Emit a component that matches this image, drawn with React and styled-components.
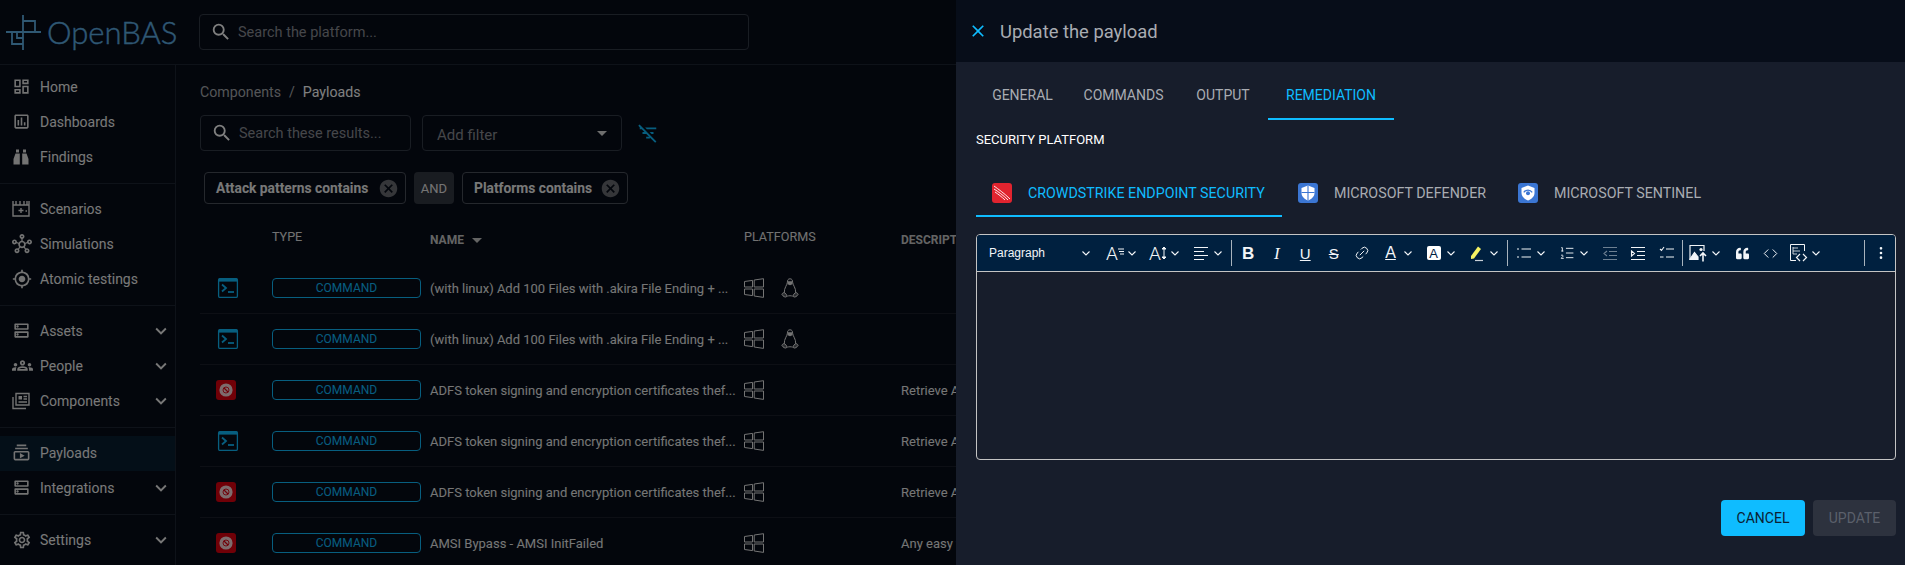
import React from "react";
import styled, { createGlobalStyle } from "styled-components";
import {
  MdOutlineDashboard, MdOutlineInsertChart, MdOutlineHub, MdOutlineGpsFixed, MdOutlineDns, MdOutlineGroups,
  MdOutlineSubscriptions, MdOutlineSettings, MdExpandMore, MdSearch, MdCancel, MdArrowDropDown, MdClose, MdFilterListOff,
} from "react-icons/md";
import { FaQuoteLeft } from "react-icons/fa";
import { Code, EllipsisVertical, Link2, ListOrdered } from "lucide-react";

const GlobalStyle = createGlobalStyle`
  html, body { margin: 0; padding: 0; background: #070d19; }
  body { font-family: Roboto, "Noto Sans", sans-serif; color: #fff; overflow: hidden; }
  * { box-sizing: border-box; }
`;

const Page = styled.div`
  width: 1905px;
  height: 565px;
  overflow: hidden;
  display: flex;
  flex-direction: column;
`;

const TopBar = styled.header`
  height: 65px;
  flex: none;
  display: flex;
  align-items: center;
  border-bottom: 1px solid #1c2433;
  padding-left: 6px;
`;

const Logo = styled.div`
  width: 193px;
  display: flex;
  align-items: center;
  gap: 6px;
  font-family: Lato, sans-serif;
  font-weight: 300;
  font-size: 31px;
  -webkit-text-stroke: 0.4px #5fb0e6;
  color: #5fb0e6;
  svg { flex: none; }
`;

const SearchBox = styled.div`
  width: ${(p) => p.$w}px;
  height: 36px;
  display: flex;
  align-items: center;
  gap: 6px;
  padding-left: 10px;
  border: 1px solid #333a47;
  border-radius: 4px;
  color: #fff;
  font-size: 14.5px;
  span { color: #8b8e95; }
`;

const Body = styled.div`
  flex: 1;
  display: flex;
  min-height: 0;
`;

const Sidebar = styled.nav`
  width: 176px;
  flex: none;
  border-right: 1px solid #1c2433;
`;

const MenuGroup = styled.div`
  padding: ${(p) => (p.$first ? "5px" : "8px")} 0 8px;
  border-bottom: ${(p) => (p.$last ? "none" : "1px solid #1c2433")};
`;

const MenuItem = styled.div`
  height: 35px;
  display: flex;
  align-items: center;
  padding: 0 0 2px 12px;
  font-size: 14px;
  background: ${(p) => (p.$active ? "rgba(15,188,255,.1)" : "transparent")};
`;

const MenuIcon = styled.span`
  width: 28px;
  flex: none;
  display: flex;
  color: #e6e6e6;
`;

const MenuLabel = styled.span`
  flex: 1;
  color: #f2f2f2;
`;

const MenuChevron = styled(MdExpandMore)`
  font-size: 22px;
  margin-right: 3px;
  color: #eee;
`;

const Main = styled.main`
  flex: 1;
  min-width: 0;
  padding: 17px 0 0 24px;
`;

const Crumbs = styled.div`
  height: 20px;
  display: flex;
  align-items: center;
  gap: 8px;
  font-size: 14.2px;
  color: #a8abb0;
  b { font-weight: 400; color: #fff; }
`;

const FilterRow = styled.div`
  margin-top: 13px;
  display: flex;
  align-items: center;
  gap: 11px;
`;

const AddFilter = styled.div`
  width: 200px;
  height: 36px;
  display: flex;
  align-items: center;
  justify-content: space-between;
  padding: 3px 7px 0 14px;
  border: 1px solid #333a47;
  border-radius: 4px;
  font-size: 15px;
  color: #8b8e95;
  svg { color: #ddd; font-size: 24px; margin-top: -3px; }
`;

const FilterOff = styled(MdFilterListOff)`
  margin-left: 4px;
  font-size: 22px;
  color: #0fbcff;
`;

const ChipRow = styled.div`
  margin: 21px 0 0 4px;
  display: flex;
  gap: 8px;
`;

const FilterChip = styled.div`
  width: ${(p) => p.$w}px;
  height: 32px;
  display: flex;
  align-items: center;
  justify-content: space-between;
  padding: 0 6px 0 11px;
  border: 1px solid #4b505b;
  border-radius: 4px;
  font-size: 13.8px;
  font-weight: 700;
  color: #f0f0f0;
  svg { font-size: 21px; color: #6a6d73; }
`;

const AndChip = styled.div`
  width: 40px;
  height: 32px;
  display: flex;
  align-items: center;
  justify-content: center;
  border-radius: 4px;
  background: #333842;
  font-size: 13px;
  color: #e8e8e8;
`;

const HeaderRow = styled.div`
  height: 59px;
  display: grid;
  grid-template-columns: 72px 158px 314px 157px 400px;
`;

const HeadCell = styled.div`
  padding-top: ${(p) => (p.$bold ? "28px" : "25px")};
  display: flex;
  align-items: flex-start;
  font-size: ${(p) => (p.$bold ? "12px" : "12.6px")};
  font-weight: ${(p) => (p.$bold ? 700 : 400)};
  line-height: 16px;
  color: ${(p) => (p.$bold ? "#c8c8c8" : "#e4e4e4")};
  svg { font-size: 24px; margin: -4px 0 0 1px; }
`;

const Row = styled.div`
  height: 51px;
  display: grid;
  grid-template-columns: 72px 158px 314px 157px 400px;
  align-items: center;
  border-bottom: 1px solid #1a1f2a;
  font-size: 13px;
  color: #eceded;
`;

const RowIcon = styled.span`
  display: flex;
  padding-left: 16px;
`;

const TypeChip = styled.div`
  width: 149px;
  height: 20px;
  display: flex;
  align-items: center;
  justify-content: center;
  border: 1px solid #0fbcff;
  border-radius: 4px;
  font-size: 12px;
  color: #0fbcff;
`;

const RowName = styled.div`
  white-space: nowrap;
  width: 306px;
`;

const Platforms = styled.div`
  display: flex;
  gap: 17px;
  color: #e8e8e8;
`;

const RowDescription = styled.div`
  white-space: nowrap;
`;

const Overlay = styled.div`
  position: fixed;
  inset: 0;
  background: rgba(0, 0, 0, 0.5);
`;

const Drawer = styled.aside`
  position: fixed;
  top: 0;
  right: 0;
  bottom: 0;
  width: 949px;
  background: #171d2b;
  display: flex;
  flex-direction: column;
`;

const DrawerHeader = styled.div`
  height: 62px;
  flex: none;
  display: flex;
  align-items: center;
  gap: 12px;
  padding-left: 12px;
  background: #070d19;
  font-size: 18.4px;
  color: #a9acb2;
  svg { font-size: 20px; color: #0fbcff; flex: none; }
`;

const DrawerBody = styled.div`
  flex: 1;
  padding: 10px 9px 0 20px;
`;

const Tabs = styled.div`
  display: flex;
  align-items: stretch;
`;

const Tab = styled.div`
  width: ${(p) => p.$w}px;
  height: 48px;
  display: flex;
  align-items: center;
  justify-content: ${(p) => (p.$icon ? "flex-start" : "center")};
  gap: 16px;
  padding: ${(p) => (p.$icon ? "2px 0 0 16px" : "0")};
  font-size: ${(p) => (p.$icon ? "14.25px" : "14px")};
  color: ${(p) => (p.$active ? "#0fbcff" : "#a9acb2")};
  border-bottom: 2px solid ${(p) => (p.$active ? "#0fbcff" : "transparent")};
  svg { flex: none; }
`;

const SectionLabel = styled.div`
  margin-top: 12px;
  height: 16px;
  line-height: 16px;
  font-size: 13px;
  color: #fff;
`;

const SubTabs = styled(Tabs)`
  margin-top: 21px;
`;

const Editor = styled.div`
  margin-top: 17px;
  height: 226px;
  border: 1px solid #c4c4c4;
  border-radius: 4px;
  overflow: hidden;
`;

const Toolbar = styled.div`
  height: 37px;
  display: flex;
  align-items: center;
  background: #00203f;
  border-bottom: 1px solid #c4c4c4;
  color: #f2f5f8;
`;

const HeadingPicker = styled.div`
  width: 124px;
  display: flex;
  align-items: center;
  justify-content: space-between;
  padding: 0 10px 0 12px;
  font-family: "Liberation Sans", sans-serif;
  font-size: 12px;
`;

const Tool = styled.span`
  width: ${(p) => (p.$drop ? 43 : 28.5)}px;
  height: 26px;
  flex: none;
  display: flex;
  align-items: center;
  justify-content: ${(p) => (p.$drop ? "flex-start" : "center")};
  gap: 2px;
  padding-left: ${(p) => (p.$drop ? 4 : 0)}px;
  opacity: ${(p) => (p.$off ? 0.45 : 1)};
`;

const ToolIcon = styled.span`
  width: 20px;
  height: 20px;
  flex: none;
  display: flex;
  align-items: center;
  justify-content: center;
`;

const ToolSep = styled.span`
  width: 1px;
  height: 26px;
  flex: none;
  margin: 0 2px 0 1px;
  background: #a8b3bd;
`;

const ToolSpace = styled.span`
  flex: 1;
`;

const Letter = styled.span`
  font-size: ${(p) => p.$size || 15}px;
  font-weight: ${(p) => (p.$bold ? 700 : p.$thin ? 300 : 400)};
  font-style: ${(p) => (p.$italic ? "italic" : "normal")};
  font-family: ${(p) => (p.$serif ? '"Liberation Serif", serif' : p.$thin ? "Roboto, sans-serif" : '"Liberation Sans", sans-serif')};
  text-decoration: ${(p) => p.$line || "none"};
  line-height: 1;
`;

const BoxLetter = styled.span`
  width: 14px;
  height: 14px;
  display: flex;
  align-items: center;
  justify-content: center;
  background: #fff;
  border-radius: 2px;
  color: #00203f;
  font-family: "Liberation Sans", sans-serif;
  font-size: 13px;
`;

const Actions = styled.div`
  margin-top: 40px;
  display: flex;
  justify-content: flex-end;
  gap: 8px;
`;

const ActionButton = styled.div`
  height: 36px;
  width: ${(p) => p.$w}px;
  display: flex;
  align-items: center;
  justify-content: center;
  border-radius: 4px;
  font-size: 14px;
  background: ${(p) => (p.$primary ? "#0fbcff" : "#2d323e")};
  color: ${(p) => (p.$primary ? "#0b2133" : "#5b606b")};
`;

const LogoMark = () => (
  <svg width="35" height="35" viewBox="0 0 35 35" fill="none" stroke="#5fb0e6" strokeWidth="1.8">
    <path d="M0 17H35M17 0V35M17 6H29V17M6 17V29H17M11 17V23H17" />
  </svg>
);

const FindingsIcon = () => (
  <svg width="18" height="18" viewBox="0 0 18 18" fill="currentColor">
    <path d="M4 1.5H7V4.5H4ZM11 1.5H14V4.5H11Z" />
    <path d="M3.5 5.5H7.8V16.5H1.5V11ZM10.2 5.5H14.5L16.5 11V16.5H10.2Z" />
  </svg>
);

const ScenarioIcon = () => (
  <svg width="18" height="18" viewBox="0 0 18 18" fill="none" stroke="currentColor" strokeWidth="1.4">
    <path d="M1 5V16H17V5M1 1V5H17V1M4 1V5M8 1V5M12 1V5M15 1V5" />
    <path d="M9 8V13M6.5 10.5H11.5M13.5 11H15" />
  </svg>
);

const ComponentsIcon = () => (
  <svg width="18" height="18" viewBox="0 0 18 18" fill="none" stroke="currentColor" strokeWidth="1.4">
    <path d="M4 1.5H17V13H4ZM1 5V16.5H14" />
    <path d="M6.5 4H10V7.5H6.5Z" fill="currentColor" stroke="none" />
    <path d="M11.5 4.5H15M11.5 7H15M6.5 10H15" />
  </svg>
);

const TerminalIcon = () => (
  <svg width="24" height="20" viewBox="0 0 24 20" fill="none">
    <rect x="2.6" y="0.6" width="18.8" height="18.8" rx="1.5" stroke="#0fbcff" strokeWidth="1.3" />
    <rect x="2.6" y="0.6" width="18.8" height="3" fill="#0fbcff" />
    <path d="M6 6.5L10 10L6 13.5" stroke="#0fbcff" strokeWidth="1.8" />
    <path d="M12 14H18" stroke="#0fbcff" strokeWidth="1.8" />
  </svg>
);

const BlockedIcon = () => (
  <svg width="24" height="20" viewBox="0 0 24 20" fill="none">
    <rect width="20" height="20" rx="3" fill="#e0000f" />
    <circle cx="10" cy="10" r="6.6" fill="#ffffff" fillOpacity=".85" />
    <circle cx="10" cy="10" r="3" fill="none" stroke="#e0000f" strokeWidth=".9" />
    <path d="M8 8L12 12" stroke="#e0000f" strokeWidth="1.1" />
  </svg>
);

const WindowsIcon = () => (
  <svg width="20" height="20" viewBox="0 0 20 20" fill="none" stroke="currentColor" strokeWidth="1">
    <path d="M.5 3.5L8.5 2.4V9H.5ZM10.2 2L19.5.7V9H10.2ZM.5 11H8.5V17.6L.5 16.5ZM10.2 11H19.5V19.4L10.2 18Z" />
  </svg>
);

const LinuxIcon = () => (
  <svg width="18" height="20" viewBox="0 0 18 20" fill="none" stroke="currentColor" strokeWidth="1">
    <path d="M9 .8C7 .8 6.4 2.3 6.4 4.2C6.4 6.8 2.9 10 3.3 14.8M9 .8C11 .8 11.6 2.3 11.6 4.2C11.6 6.8 15.1 10 14.7 14.8" />
    <path d="M6.2 18.2C8 17.6 10 17.6 11.8 18.2" />
    <path d="M.9 16.4C1.4 14.8 3 14.2 4 15C5.5 16.2 6.2 17.6 5.5 18.7C4.7 19.7 1.8 18.4.9 16.4ZM17.1 16.4C16.6 14.8 15 14.2 14 15C12.5 16.2 11.8 17.6 12.5 18.7C13.3 19.7 16.2 18.4 17.1 16.4Z" fill="currentColor" fillOpacity=".35" />
    <path d="M6.6 3.2H11.4V6.2L9 7.2L6.6 6.2Z" fill="currentColor" stroke="none" />
  </svg>
);

const CrowdstrikeIcon = () => (
  <svg width="20" height="20" viewBox="0 0 20 20" fill="none">
    <rect width="20" height="20" rx="3" fill="#e1242f" />
    <path d="M2 3C6 6 12 10 18 16M2 6C6 8.5 11 12 16 17M3 9C6 11 10 14 13 17" stroke="#fff" strokeWidth=".9" />
  </svg>
);

const DefenderIcon = () => (
  <svg width="20" height="20" viewBox="0 0 20 20" fill="none">
    <rect width="20" height="20" rx="3" fill="#3b76d3" />
    <path d="M10 2.5L16.5 5V10C16.5 13.5 13.5 16.3 10 17.5C6.5 16.3 3.5 13.5 3.5 10V5Z" fill="#fff" />
    <path d="M10 2.5V17.5M3.5 9.5H16.5" stroke="#3b76d3" strokeWidth="1.1" />
  </svg>
);

const SentinelIcon = () => (
  <svg width="20" height="20" viewBox="0 0 20 20" fill="none">
    <rect width="20" height="20" rx="3" fill="#3b76d3" />
    <path d="M10 2.5L16.5 5V10C16.5 13.5 13.5 16.3 10 17.5C6.5 16.3 3.5 13.5 3.5 10V5Z" fill="#fff" />
    <path d="M5.8 9.3C7.8 6.3 12.2 6.3 14.2 9.3" stroke="#3b76d3" strokeWidth="1.3" />
    <circle cx="10" cy="10.3" r="2" fill="#3b76d3" />
  </svg>
);

const Chevron = () => (
  <svg width="10" height="10" viewBox="0 0 10 10" fill="none" stroke="currentColor" strokeWidth="1.1">
    <path d="M1.5 3.5L5 7L8.5 3.5" />
  </svg>
);

const Lines = ({ d }) => (
  <svg width="18" height="18" viewBox="0 0 18 18" fill="none" stroke="currentColor" strokeWidth="1.1">
    <path d={d} />
  </svg>
);

const SizeMark = () => (
  <svg width="6" height="10" viewBox="0 0 6 10" fill="none" stroke="currentColor" strokeWidth="1">
    <path d="M0 1H6M1 3.5H6M2 6H6" />
  </svg>
);

const HeightMark = () => (
  <svg width="6" height="14" viewBox="0 0 6 14" fill="currentColor" stroke="currentColor" strokeWidth="1">
    <path d="M3 2V12" />
    <path d="M1 3L3 1L5 3ZM1 11L3 13L5 11Z" />
  </svg>
);

const HighlightIcon = () => (
  <svg width="18" height="18" viewBox="0 0 18 18" fill="none">
    <path d="M3 12L10 2.5L13 5L6 14.5L3 15Z" fill="#f5f263" />
    <path d="M7 16.5H15" stroke="#c8d0d8" strokeWidth="1.2" />
  </svg>
);

const ImageIcon = () => (
  <svg width="20" height="18" viewBox="0 0 20 18" fill="none" stroke="currentColor" strokeWidth="1.2">
    <path d="M9 15.5H1V1.5H15V7" />
    <path d="M1 15L5.5 8.5L9 13V15.5H1Z" fill="currentColor" />
    <circle cx="12" cy="5.5" r="1.6" fill="currentColor" stroke="none" />
    <path d="M14 17.5V9.5M11 12L14 9L17 12" strokeWidth="1.6" />
  </svg>
);

const EmbedIcon = () => (
  <svg width="20" height="20" viewBox="0 0 20 20" fill="none" stroke="currentColor" strokeWidth="1">
    <path d="M7 17.5H1.5V1.5H15.5V8" />
    <path d="M4 4V11M4 5H9M4 8H11M4 11H8" strokeOpacity=".8" />
    <path d="M11 11L7.5 14.5L11 18M14 11L17.5 14.5L14 18" strokeWidth="1.2" />
  </svg>
);

const menu = [
  [
    ["Home", <MdOutlineDashboard size={19} />],
    ["Dashboards", <MdOutlineInsertChart size={19} />],
    ["Findings", <FindingsIcon />],
  ],
  [
    ["Scenarios", <ScenarioIcon />],
    ["Simulations", <MdOutlineHub size={20} />],
    ["Atomic testings", <MdOutlineGpsFixed size={20} />],
  ],
  [
    ["Assets", <MdOutlineDns size={19} />, true],
    ["People", <MdOutlineGroups size={21} />, true],
    ["Components", <ComponentsIcon />, true],
  ],
  [
    ["Payloads", <MdOutlineSubscriptions size={19} />, false, true],
    ["Integrations", <MdOutlineDns size={19} />, true],
  ],
  [["Settings", <MdOutlineSettings size={20} />, true]],
];

const akira = "(with linux) Add 100 Files with .akira File Ending + ...";
const adfs = "ADFS token signing and encryption certificates thef...";
const retrieve = "Retrieve ADFS token signing and encryption certificates";

const rows = [
  { blocked: false, name: akira, linux: true, description: "" },
  { blocked: false, name: akira, linux: true, description: "" },
  { blocked: true, name: adfs, description: retrieve },
  { blocked: false, name: adfs, description: retrieve },
  { blocked: true, name: adfs, description: retrieve },
  { blocked: true, name: "AMSI Bypass - AMSI InitFailed", description: "Any easy way to bypass AMSI inspection" },
];

export default function App() {
  return (
    <Page>
      <GlobalStyle />
      <TopBar>
        <Logo>
          <LogoMark />
          OpenBAS
        </Logo>
        <SearchBox $w={550}>
          <MdSearch size={22} />
          <span>Search the platform...</span>
        </SearchBox>
      </TopBar>
      <Body>
        <Sidebar>
          {menu.map((group, i) => (
            <MenuGroup key={i} $first={i === 0} $last={i === menu.length - 1}>
              {group.map(([label, icon, more, active]) => (
                <MenuItem key={label} $active={active}>
                  <MenuIcon>{icon}</MenuIcon>
                  <MenuLabel>{label}</MenuLabel>
                  {more && <MenuChevron />}
                </MenuItem>
              ))}
            </MenuGroup>
          ))}
        </Sidebar>
        <Main>
          <Crumbs>
            Components <span>/</span> <b>Payloads</b>
          </Crumbs>
          <FilterRow>
            <SearchBox $w={211}>
              <MdSearch size={22} />
              <span>Search these results...</span>
            </SearchBox>
            <AddFilter>
              Add filter
              <MdArrowDropDown />
            </AddFilter>
            <FilterOff />
          </FilterRow>
          <ChipRow>
            <FilterChip $w={202}>
              Attack patterns contains
              <MdCancel />
            </FilterChip>
            <AndChip>AND</AndChip>
            <FilterChip $w={166}>
              Platforms contains
              <MdCancel />
            </FilterChip>
          </ChipRow>
          <HeaderRow>
            <HeadCell />
            <HeadCell>TYPE</HeadCell>
            <HeadCell $bold>
              NAME
              <MdArrowDropDown />
            </HeadCell>
            <HeadCell>PLATFORMS</HeadCell>
            <HeadCell $bold>DESCRIPTION</HeadCell>
          </HeaderRow>
          {rows.map((row, i) => (
            <Row key={i}>
              <RowIcon>{row.blocked ? <BlockedIcon /> : <TerminalIcon />}</RowIcon>
              <TypeChip>COMMAND</TypeChip>
              <RowName>{row.name}</RowName>
              <Platforms>
                <WindowsIcon />
                {row.linux && <LinuxIcon />}
              </Platforms>
              <RowDescription>{row.description}</RowDescription>
            </Row>
          ))}
        </Main>
      </Body>
      <Overlay />
      <Drawer>
        <DrawerHeader>
          <MdClose />
          Update the payload
        </DrawerHeader>
        <DrawerBody>
          <Tabs>
            <Tab $w={93}>GENERAL</Tab>
            <Tab $w={109}>COMMANDS</Tab>
            <Tab $w={90}>OUTPUT</Tab>
            <Tab $w={126} $active>REMEDIATION</Tab>
          </Tabs>
          <SectionLabel>SECURITY PLATFORM</SectionLabel>
          <SubTabs>
            <Tab $w={306} $icon $active><CrowdstrikeIcon />CROWDSTRIKE ENDPOINT SECURITY</Tab>
            <Tab $w={220} $icon><DefenderIcon />MICROSOFT DEFENDER</Tab>
            <Tab $w={214} $icon><SentinelIcon />MICROSOFT SENTINEL</Tab>
          </SubTabs>
          <Editor>
            <Toolbar>
              <HeadingPicker>Paragraph <Chevron /></HeadingPicker>
              <Tool $drop><ToolIcon><Letter $size={19} $thin>A</Letter><SizeMark /></ToolIcon><Chevron /></Tool>
              <Tool $drop><ToolIcon><Letter $size={19} $thin>A</Letter><HeightMark /></ToolIcon><Chevron /></Tool>
              <Tool $drop><ToolIcon><Lines d="M2 3.5H16M2 7.5H12M2 11.5H16M2 15.5H12" /></ToolIcon><Chevron /></Tool>
              <ToolSep />
              <Tool><Letter $size={17} $bold>B</Letter></Tool>
              <Tool><Letter $size={17} $italic $serif>I</Letter></Tool>
              <Tool><Letter $size={15} $line="underline">U</Letter></Tool>
              <Tool><Letter $size={15} $line="line-through">S</Letter></Tool>
              <Tool><Link2 size={16} strokeWidth={1.4} transform="rotate(-45)" /></Tool>
              <Tool $drop><ToolIcon><Letter $size={16} $line="underline">A</Letter></ToolIcon><Chevron /></Tool>
              <Tool $drop><ToolIcon><BoxLetter>A</BoxLetter></ToolIcon><Chevron /></Tool>
              <Tool $drop><ToolIcon><HighlightIcon /></ToolIcon><Chevron /></Tool>
              <ToolSep />
              <Tool $drop><ToolIcon><Lines d="M6.5 5H16M6.5 13H16M2 5H4M2 13H4" /></ToolIcon><Chevron /></Tool>
              <Tool $drop><ToolIcon><ListOrdered size={16} strokeWidth={1.4} /></ToolIcon><Chevron /></Tool>
              <Tool $off><Lines d="M2 3.5H16M8 7.5H16M8 11.5H16M2 15.5H16M6 7L3 9.5L6 12" /></Tool>
              <Tool><Lines d="M2 3.5H16M8 7.5H16M8 11.5H16M2 15.5H16M2.5 7L5.5 9.5L2.5 12Z" /></Tool>
              <Tool><Lines d="M8 5H16M8 13H16M2 5L3.5 6.5L6 3M2 13H5.5" /></Tool>
              <ToolSep />
              <Tool $drop><ToolIcon><ImageIcon /></ToolIcon><Chevron /></Tool>
              <Tool><FaQuoteLeft size={13} /></Tool>
              <Tool><Code size={15} strokeWidth={1.6} /></Tool>
              <Tool $drop><ToolIcon><EmbedIcon /></ToolIcon><Chevron /></Tool>
              <ToolSpace />
              <ToolSep />
              <Tool><EllipsisVertical size={16} strokeWidth={2} /></Tool>
            </Toolbar>
          </Editor>
          <Actions>
            <ActionButton $w={84} $primary>CANCEL</ActionButton>
            <ActionButton $w={83}>UPDATE</ActionButton>
          </Actions>
        </DrawerBody>
      </Drawer>
    </Page>
  );
}
